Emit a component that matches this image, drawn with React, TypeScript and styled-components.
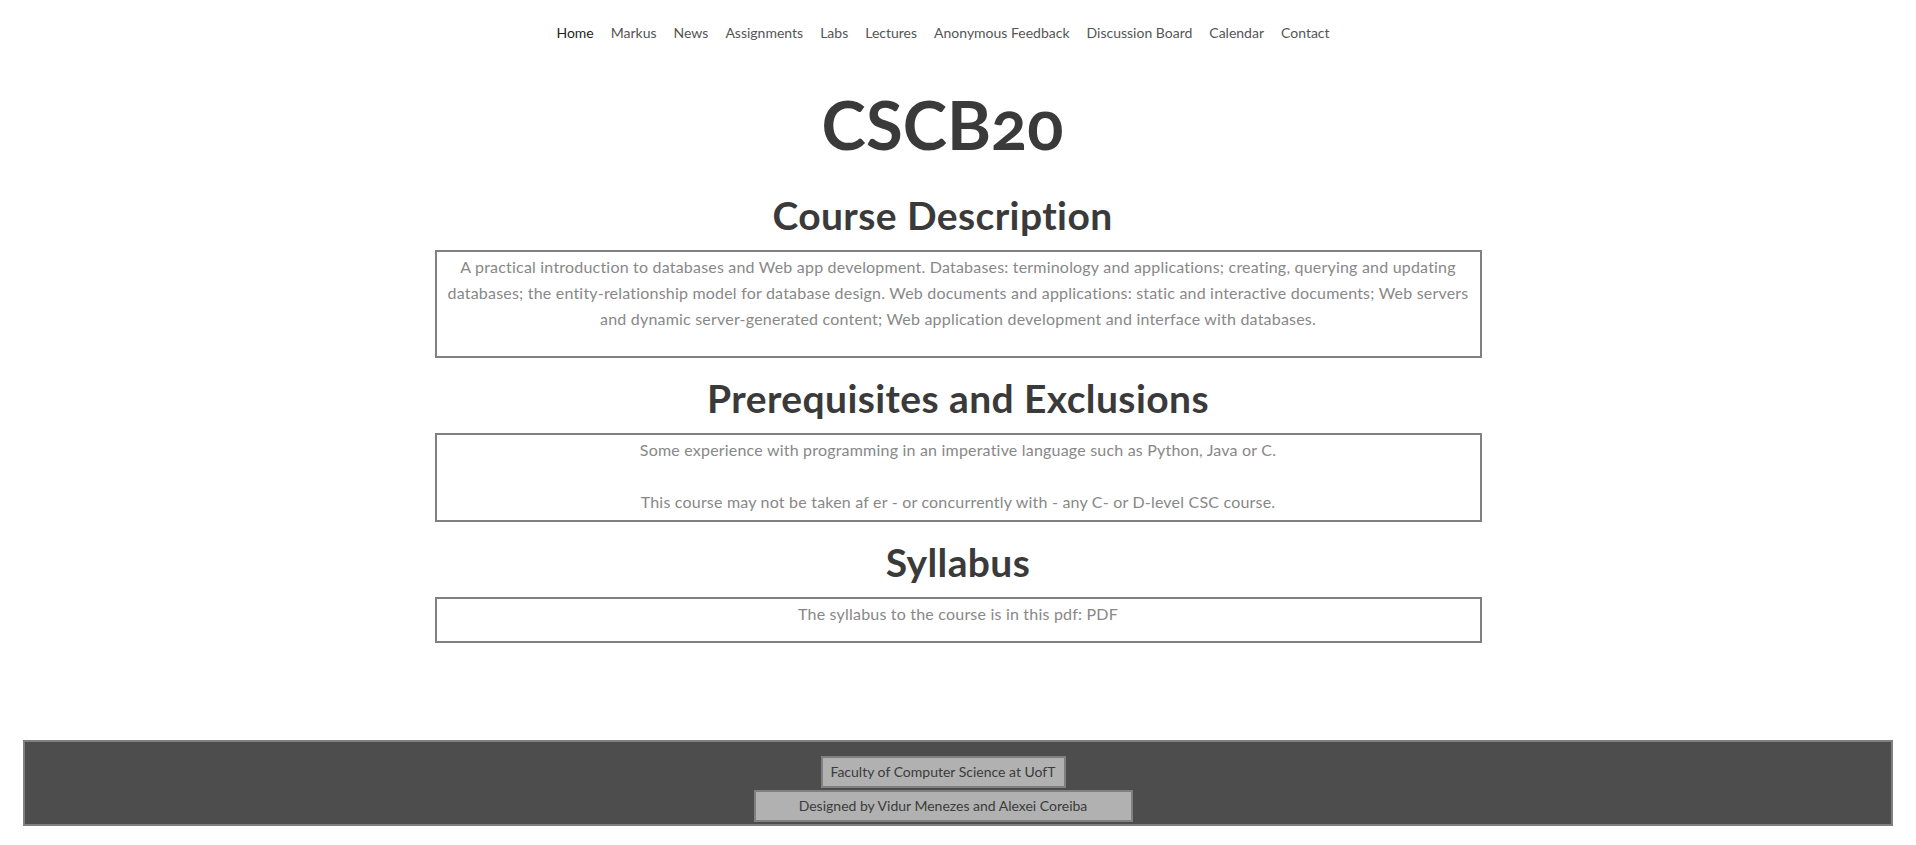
import React from "react";
import styled, { createGlobalStyle } from "styled-components";

const GlobalStyle = createGlobalStyle`
  body {
    margin: 8px;
    background: #ffffff;
    font-family: Lato, "Open Sans", sans-serif;
  }
`;

const Nav = styled.nav`
  display: flex;
  justify-content: center;
  gap: 17px;
  padding: 13px 30px 0 0;
  height: 24px;
  font-size: 14px;
  line-height: 24px;
`;

const NavLink = styled.a<{ $active?: boolean }>`
  color: ${(p) => (p.$active ? "#1f1f1f" : "#555555")};
  text-decoration: none;
  white-space: nowrap;
`;

const Main = styled.main`
  width: 1047px;
  margin: 0 auto;
  display: flex;
  flex-direction: column;
  align-items: stretch;
`;

const Title = styled.h1`
  margin: 39px 0 0;
  padding-right: 31px;
  height: 80px;
  font-size: 67px;
  line-height: 80px;
  font-weight: 700;
  color: #3a3a3a;
  text-align: center;
  font-variant-numeric: oldstyle-nums;
`;

const SectionTitle = styled.h2<{ $top: number; $shift?: number }>`
  margin: ${(p) => p.$top}px 0 11px;
  padding-right: ${(p) => p.$shift ?? 0}px;
  height: 48px;
  font-size: 39px;
  line-height: 48px;
  letter-spacing: 0.4px;
  font-weight: 700;
  color: #3a3a3a;
  text-align: center;
`;

const Box = styled.section<{ $bottom: number }>`
  border: 2px solid #808080;
  padding: 2px 4px ${(p) => p.$bottom}px;
  color: #888888;
  font-size: 16px;
  line-height: 26px;
  letter-spacing: 0.2px;
  text-align: center;
`;

const Para = styled.p<{ $gap?: number }>`
  margin: ${(p) => p.$gap ?? 0}px 0 0;
`;

const Footer = styled.footer`
  margin: 97px 15px 0;
  border: 2px solid #808080;
  background: #4d4d4d;
  display: flex;
  flex-direction: column;
  align-items: center;
  gap: 2px;
  padding: 14px 30px 2px 0;
`;

const Badge = styled.div<{ $width: number }>`
  box-sizing: border-box;
  width: ${(p) => p.$width}px;
  background: #b1b1b1;
  border: 2px solid #808080;
  height: 32px;
  line-height: 28px;
  font-size: 14px;
  color: #3b3b3b;
  text-align: center;
  white-space: nowrap;
`;

const links = [
  "Home",
  "Markus",
  "News",
  "Assignments",
  "Labs",
  "Lectures",
  "Anonymous Feedback",
  "Discussion Board",
  "Calendar",
  "Contact",
];

export default function App() {
  return (
    <>
      <GlobalStyle />
      <Nav>
        {links.map((l, i) => (
          <NavLink key={l} href="#" $active={i === 0}>
            {l}
          </NavLink>
        ))}
      </Nav>
      <Main>
        <Title>CSCB20</Title>
        <SectionTitle $top={27} $shift={31}>
          Course Description
        </SectionTitle>
        <Box $bottom={24}>
          <Para>
            A practical introduction to databases and Web app development. Databases: terminology and
            applications; creating, querying and updating databases; the entity-relationship model for
            database design. Web documents and applications: static and interactive documents; Web
            servers and dynamic server-generated content; Web application development and interface with
            databases.
          </Para>
        </Box>
        <SectionTitle $top={16}>Prerequisites and Exclusions</SectionTitle>
        <Box $bottom={5}>
          <Para>Some experience with programming in an imperative language such as Python, Java or C.</Para>
          <Para $gap={26}>
            This course may not be taken af er - or concurrently with - any C- or D-level CSC course.
          </Para>
        </Box>
        <SectionTitle $top={16}>Syllabus</SectionTitle>
        <Box $bottom={14}>
          <Para>The syllabus to the course is in this pdf: PDF</Para>
        </Box>
      </Main>
      <Footer>
        <Badge $width={245}>Faculty of Computer Science at UofT</Badge>
        <Badge $width={379}>Designed by Vidur Menezes and Alexei Coreiba</Badge>
      </Footer>
    </>
  );
}
